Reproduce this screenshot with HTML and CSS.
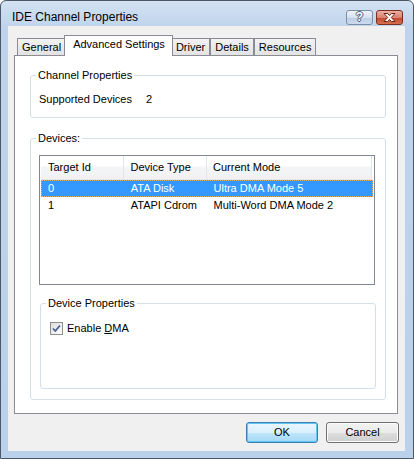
FILE: index.html
```html
<!DOCTYPE html>
<html>
<head>
<meta charset="utf-8">
<link rel="stylesheet" href="styles.css">
</head>
<body>
<div class="window">
  <div class="titlebar">
    <span class="title">IDE Channel Properties</span>
    <div class="caption-buttons">
      <div class="cap help">?</div>
      <div class="cap close">
        <svg width="13" height="9" viewBox="0 0 13 9"><path d="M1 0.5 H4.5 L6.5 2.6 L8.5 0.5 H12 L8.3 4.5 L12 8.5 H8.5 L6.5 6.4 L4.5 8.5 H1 L4.7 4.5 Z" fill="#fff" stroke="#6a2418" stroke-width="1" stroke-linejoin="round"/></svg>
      </div>
    </div>
  </div>
  <div class="client">
    <div class="tabs">
      <div class="tab">General</div>
      <div class="tab selected">Advanced Settings</div>
      <div class="tab">Driver</div>
      <div class="tab">Details</div>
      <div class="tab">Resources</div>
    </div>
    <div class="panel">
      <fieldset class="group channel">
        <legend>Channel Properties</legend>
        <div class="prop-row"><span class="prop-label">Supported Devices</span><span>2</span></div>
      </fieldset>
      <fieldset class="group devices">
        <legend>Devices:</legend>
        <div class="listview">
          <div class="lv-header">
            <div class="col c1">Target Id</div>
            <div class="col c2">Device Type</div>
            <div class="col c3">Current Mode</div>
          </div>
          <div class="lv-row selected">
            <div class="col c1">0</div>
            <div class="col c2">ATA Disk</div>
            <div class="col c3">Ultra DMA Mode 5</div>
          </div>
          <div class="lv-row">
            <div class="col c1">1</div>
            <div class="col c2">ATAPI Cdrom</div>
            <div class="col c3">Multi-Word DMA Mode 2</div>
          </div>
        </div>
        <fieldset class="group inner">
          <legend>Device Properties</legend>
          <div class="check">
            <span class="box"><svg width="11" height="11" viewBox="0 0 11 11"><path d="M2 5.5 L4.3 8 L9 2.5" fill="none" stroke="#4b5f98" stroke-width="1.8"/></svg></span>
            <span>Enable <u>D</u>MA</span>
          </div>
        </fieldset>
      </fieldset>
    </div>
    <div class="buttons">
      <div class="btn default">OK</div>
      <div class="btn">Cancel</div>
    </div>
  </div>
</div>
</body>
</html>
```
FILE: styles.css
```css
* { box-sizing: border-box; }
html, body { margin: 0; padding: 0; background: #fff; }
body {
  font-family: "Liberation Sans", Arial, sans-serif;
  font-size: 11px;
  line-height: 13px;
  color: #000;
}
.window {
  width: 414px;
  height: 459px;
  border: 1px solid #4c5868;
  border-radius: 6px 6px 0 0;
  background: linear-gradient(#d3e2f3 0px, #bfd4ec 26px, #b9d1ea 100%);
  padding: 0 8px 7px 7px;
  display: flex;
  flex-direction: column;
}
.titlebar {
  height: 25px;
  display: flex;
  align-items: flex-start;
  justify-content: space-between;
}
.title {
  font-size: 12px;
  margin: 10px 0 0 4px;
  color: #000;
}
.caption-buttons {
  display: flex;
  gap: 3px;
  margin: 9px 2px 0 0;
}
.cap {
  width: 27px;
  height: 15px;
  border-radius: 3px;
  display: flex;
  align-items: center;
  justify-content: center;
}
.help {
  border: 1px solid #7d8ea5;
  background: linear-gradient(#eef3fa 0%, #d6e2f1 50%, #bccde4 51%, #cbdcef 100%);
  color: #fff;
  font-weight: bold;
  font-size: 12px;
  text-shadow: 1px 0 0 #4a5a72, -1px 0 0 #4a5a72, 0 1px 0 #4a5a72, 0 -1px 0 #4a5a72;
}
.close {
  border: 1px solid #7b2f22;
  background: linear-gradient(#eab0a2 0%, #d98270 50%, #c2462e 51%, #d6704f 100%);
}
.client {
  flex: 1;
  background: #f0f0f0;
  padding: 9px 0 0 6px;
  display: flex;
  flex-direction: column;
}
.tabs {
  display: flex;
  align-items: flex-end;
  height: 20px;
  padding-left: 3px;
}
.tab {
  height: 17px;
  border: 1px solid #898c95;
  border-bottom: none;
  background: linear-gradient(#f2f2f2, #e3e3e3);
  padding: 2px 4px 0 4px;
}
.tab.selected {
  position: relative;
  z-index: 1;
  height: 21px;
  margin: 0 -2px -1px -2px;
  padding: 2px 7px 0 8px;
  background: #fff;
}
.panel {
  width: 384px;
  height: 359px;
  border: 1px solid #898c95;
  background: #fff;
  padding-top: 13px;
}
.group {
  border: 1px solid #d5dfe5;
  border-radius: 3px;
  margin: 0;
  min-width: 0;
}
.group legend {
  padding: 0 2px;
  line-height: 13px;
}
.channel {
  margin: 0 11px 0 15px;
  padding: 11px 8px 11px 5px;
}
.prop-row {
  display: flex;
  padding-left: 3px;
}
.prop-label { width: 107px; }
.devices {
  margin: 14px 11px 0 15px;
  padding: 10px 10px 10px 5px;
}
.listview {
  margin-left: 3px;
  height: 130px;
  border: 1px solid #828790;
  padding: 0 1px;
}
.lv-header {
  display: flex;
  height: 24px;
  align-items: center;
  background: linear-gradient(#ffffff 0%, #ffffff 45%, #f4f5f7 46%, #f1f2f4 100%);
  border-bottom: 1px solid #e3e5e8;
  margin: 0 1px 0 0;
}
.lv-header .col {
  height: 100%;
  display: flex;
  align-items: center;
  border-right: 1px solid #e3e5e8;
}
.col.c1 { width: 83px; padding-left: 7px; }
.col.c2 { width: 84px; padding-left: 7px; }
.col.c3 { width: 166px; padding-left: 6px; }
.lv-row {
  display: flex;
  height: 17px;
  align-items: center;
}
.lv-row.selected {
  background: #3399ff;
  color: #fff;
  outline: 1px dotted #e8b070;
  outline-offset: -1px;
}
.inner {
  margin: 12px -1px 0 4px;
  padding: 12px 10px 53px 5px;
}
.check {
  display: flex;
  align-items: center;
  gap: 4px;
  padding-left: 4px;
}
.box {
  width: 13px;
  height: 13px;
  border: 1px solid #8e8f8f;
  background: linear-gradient(135deg, #dcdcdc, #ffffff);
  display: flex;
  align-items: center;
  justify-content: center;
}
.box svg { display: block; }
.buttons {
  display: flex;
  gap: 8px;
  margin: 8px 0 0 232px;
}
.btn {
  width: 73px;
  height: 21px;
  border: 1px solid #707070;
  border-radius: 3px;
  background: linear-gradient(#f2f2f2 0%, #ebebeb 50%, #dddddd 51%, #cfcfcf 100%);
  display: flex;
  align-items: center;
  justify-content: center;
  box-shadow: inset 0 0 0 1px #fbfbfb;
}
.btn.default {
  width: 72px;
  border-color: #3c7fb1;
  background: linear-gradient(#eaf6fd 0%, #d9f0fc 50%, #bee6fd 51%, #a7d9f5 100%);
  box-shadow: inset 0 0 0 1px #5ec7f5;
}
```
